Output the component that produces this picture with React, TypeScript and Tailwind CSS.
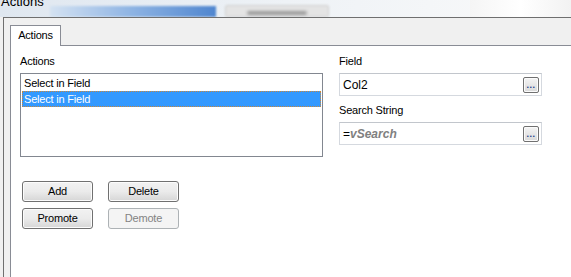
import React from "react";

const font = { fontFamily: '"Liberation Sans", Arial, sans-serif' };

function Btn({ label, disabled }: { label: string; disabled?: boolean }) {
  return disabled ? (
    <div className="w-[71px] h-[21px] flex items-center justify-center rounded-[3px] border border-[#adb2b5] bg-[#f4f4f4] text-[11px] text-[#838383]">
      {label}
    </div>
  ) : (
    <div className="w-[71px] h-[21px] flex items-center justify-center rounded-[3px] border border-[#707070] bg-gradient-to-b from-[#f2f2f2] via-[#ebebeb] to-[#d6d6d6] text-[11px] text-black shadow-[inset_0_0_0_1px_#fcfcfc]">
      {label}
    </div>
  );
}

function Dots() {
  return (
    <div className="w-[16px] h-[16px] rounded-[2px] border border-[#707070] bg-gradient-to-b from-[#f4f4f4] to-[#d9d9d9] shadow-[inset_0_0_0_1px_#fbfbfb] flex items-end justify-center">
      <span className="text-[9px] leading-[9px] text-[#1c3a8a] tracking-[0.5px] mb-[2px] font-bold">...</span>
    </div>
  );
}

export default function App() {
  return (
    <div
      className="w-[571px] h-[277px] overflow-hidden flex flex-col bg-[#f0f0f0] text-[11px] tracking-[-0.2px]"
      style={font}
    >
      {/* blurred title strip */}
      <div className="relative h-[17px] shrink-0 bg-gradient-to-r from-[#dfe7f0] via-[#eef2f6] to-[#fafafa] overflow-hidden">
        <div className="absolute left-[50px] top-[6px] w-[166px] h-[11px] bg-gradient-to-r from-[#d4e2f2] via-[#8db3e3] to-[#4f86cf] blur-[1px]" />
        <div className="absolute left-[225px] top-[5px] w-[104px] h-[12px] rounded-[2px] bg-[#e4e4e4] border border-[#d0d0d0] blur-[1px] flex items-end justify-center">
          <div className="w-[60px] h-[4px] bg-[#9a9a9a] rounded-full blur-[1px] mb-[1px]" />
        </div>
        <div className="absolute left-[470px] top-0 w-[101px] h-[17px] bg-gradient-to-r from-[#f5f5f5] via-[#ffffff] to-[#f2f2f2]" />
        <div className="absolute left-[1px] top-[-6px] text-[13px] leading-[16px] tracking-normal text-black">Actions</div>
      </div>

      {/* window frame */}
      <div className="flex-1 flex ml-[3px] border-l border-t border-[#6f6f6f] bg-[#f0f0f0]">
        <div className="flex-1 flex flex-col pl-[6px]">
          {/* tab strip */}
          <div className="h-[28px] shrink-0 flex items-end">
            <div className="w-[51px] h-[21px] border border-b-0 border-[#898c95] bg-white flex items-center justify-center pb-[1px] text-black">
              Actions
            </div>
            <div className="flex-1 border-b border-[#898c95]" />
          </div>

          {/* tab panel */}
          <div className="flex-1 border-l border-[#898c95] bg-white pl-[9px] pt-[8px] flex gap-[16px]">
            {/* left column */}
            <div className="w-[303px] flex flex-col">
              <div className="h-[14px] leading-[14px] mb-[5px]">Actions</div>
              <div className="h-[84px] border border-[#828790] bg-white p-[1px] pt-[1px]">
                <div className="h-[16px] leading-[16px] pl-[2px] text-black">Select in Field</div>
                <div className="h-[16px] leading-[14px] pl-[1px] bg-[#3399ff] border border-dotted border-[#c9873b] text-white">
                  Select in Field
                </div>
              </div>
              <div className="mt-[24px] grid grid-cols-[71px_71px] gap-x-[15px] gap-y-[6px] pl-[2px]">
                <Btn label="Add" />
                <Btn label="Delete" />
                <Btn label="Promote" />
                <Btn label="Demote" disabled />
              </div>
            </div>

            {/* right column */}
            <div className="w-[203px] flex flex-col">
              <div className="h-[14px] leading-[14px] mb-[5px]">Field</div>
              <div className="h-[23px] border border-[#d5d9df] border-t-[#c2c6cc] bg-white flex items-center justify-between pl-[3px] pr-[2px]">
                <span className="text-[12px] tracking-normal">Col2</span>
                <Dots />
              </div>
              <div className="h-[14px] leading-[14px] mt-[7px] mb-[5px]">Search String</div>
              <div className="h-[23px] border border-[#d5d9df] border-t-[#c2c6cc] bg-white flex items-center justify-between pl-[3px] pr-[2px]">
                <span className="text-[12px] tracking-normal">
                  =<span className="font-bold italic text-[#808080]">vSearch</span>
                </span>
                <Dots />
              </div>
            </div>
          </div>
        </div>
      </div>
    </div>
  );
}
